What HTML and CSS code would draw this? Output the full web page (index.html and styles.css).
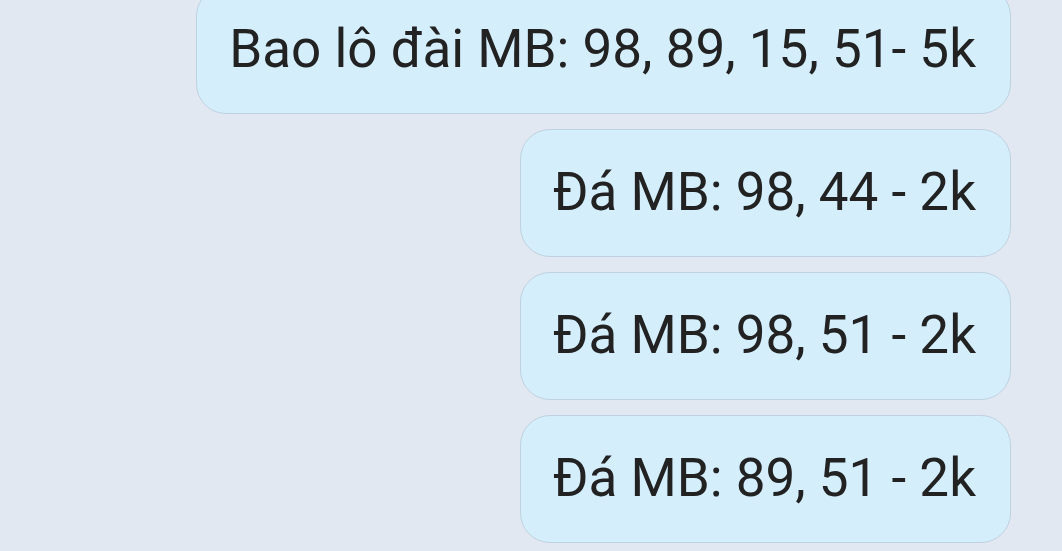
FILE: index.html
```html
<!DOCTYPE html>
<html lang="vi">
	<head>
		<meta charset="UTF-8" />
		<title>Chat</title>
		<link rel="stylesheet" href="styles.css">
	</head>
	<body>
		<div id="chat">
			<div class="bubble">Bao lô đài MB: 98, 89, 15, 51- 5k</div>
			<div class="bubble">Đá MB: 98, 44 - 2k</div>
			<div class="bubble">Đá MB: 98, 51 - 2k</div>
			<div class="bubble">Đá MB: 89, 51 - 2k</div>
		</div>
	</body>
</html>
```
FILE: styles.css
```css
html, body { margin: 0; padding: 0; background: #e1e8f1; color: #222; font-family: Roboto, sans-serif; }
body { height: 551px; overflow: hidden; }
#chat { display: flex; flex-direction: column; align-items: flex-end; gap: 15px; padding-right: 51px; margin-top: -14px; }
.bubble { box-sizing: border-box; height: 128px; display: flex; align-items: center; padding: 0 34px 2px 32px; background: #d4eefc; border: 1.5px solid #bfd2df; border-radius: 30px; font-size: 53px; white-space: nowrap; }
```
